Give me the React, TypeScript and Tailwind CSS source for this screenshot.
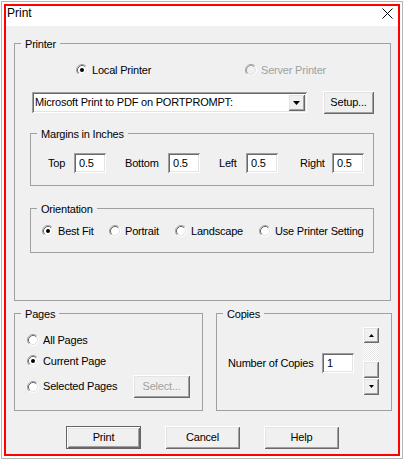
import React from "react";

// classic win32 3d edges
const raised =
  "bg-[#f0f0f0] shadow-[inset_1px_1px_0_#ffffff,inset_-1px_-1px_0_#696969,inset_2px_2px_0_#e3e3e3,inset_-2px_-2px_0_#a0a0a0]";
const sunken =
  "bg-white shadow-[inset_1px_1px_0_#a0a0a0,inset_-1px_-1px_0_#ffffff,inset_2px_2px_0_#696969,inset_-2px_-2px_0_#e3e3e3]";

function Radio({ checked = false, disabled = false }: { checked?: boolean; disabled?: boolean }) {
  return (
    <svg width="12" height="12" viewBox="0 0 12 12" className="shrink-0">
      <circle cx="6" cy="6" r="4.5" fill={disabled ? "#f0f0f0" : "#ffffff"} />
      <path d="M2.11 9.89A5.5 5.5 0 0 1 9.89 2.11" fill="none" stroke="#a0a0a0" />
      <path d="M9.89 2.11A5.5 5.5 0 0 1 2.11 9.89" fill="none" stroke="#ffffff" />
      <path d="M2.82 9.18A4.5 4.5 0 0 1 9.18 2.82" fill="none" stroke={disabled ? "#a0a0a0" : "#696969"} />
      <path d="M9.18 2.82A4.5 4.5 0 0 1 2.82 9.18" fill="none" stroke="#e3e3e3" />
      {checked && <circle cx="6" cy="6" r="2" fill="#000000" />}
    </svg>
  );
}

function Group({
  label,
  className,
  children,
}: {
  label: string;
  className: string;
  children?: React.ReactNode;
}) {
  return (
    <div className={`relative border border-[#a0a0a0] ${className}`}>
      <span className="absolute left-[6px] -top-[6px] px-[4px] bg-[#f0f0f0] leading-[13px]">
        {label}
      </span>
      {children}
    </div>
  );
}

function Button({ label, className = "" }: { label: string; className?: string }) {
  return (
    <div className={`flex items-center justify-center w-[75px] h-[23px] ${raised} ${className}`}>
      {label}
    </div>
  );
}

function Triangle({ down = true, w = 7 }: { down?: boolean; w?: number }) {
  const h = Math.ceil(w / 2);
  return (
    <svg width={w} height={h} viewBox={`0 0 ${w} ${h}`}>
      <path
        d={down ? `M0 0H${w}L${w / 2} ${h}Z` : `M0 ${h}H${w}L${w / 2} 0Z`}
        fill="#000000"
      />
    </svg>
  );
}

const margins = [
  { label: "Top", lw: "w-[26px]", ml: "ml-[17px]" },
  { label: "Bottom", lw: "w-[43px]", ml: "ml-[19px]" },
  { label: "Left", lw: "w-[27px]", ml: "ml-[19px]" },
  { label: "Right", lw: "w-[32px]", ml: "ml-[22px]" },
];

const orientations = [
  { label: "Best Fit", w: "w-[67px]", checked: true },
  { label: "Portrait", w: "w-[66px]", checked: false },
  { label: "Landscape", w: "w-[84px]", checked: false },
  { label: "Use Printer Setting", w: "", checked: false },
];

export default function App() {
  return (
    <div className="w-[405px] h-[461px] bg-white pt-[1px] pl-[1px] font-['Liberation_Sans',Arial,sans-serif] text-[11px] tracking-[-0.2px] text-black">
      <div className="w-[402px] h-[458px] border border-[#b4b4b4] p-[2px]">
        <div className="flex flex-col w-full h-full border-2 border-[#ff0000]">
          {/* title bar */}
          <div className="flex justify-between h-[20px] bg-white pl-[1px] pr-[5px]">
            <span className="text-[12px] leading-[14px] tracking-normal">Print</span>
            <svg width="11" height="11" viewBox="0 0 11 11" className="mt-[2px]">
              <path d="M0.5 0.5L10.5 10.5M10.5 0.5L0.5 10.5" stroke="#000000" strokeWidth="1" />
            </svg>
          </div>

          <div className="flex-1 flex flex-col bg-[#f0f0f0]">
            {/* Printer */}
            <Group label="Printer" className="mt-[17px] ml-[8px] w-[377px] h-[258px]">
              <div className="flex items-center h-[12px] mt-[20px] pl-[61px]">
                <div className="flex items-center gap-[4px] w-[169px]">
                  <Radio checked />
                  <span>Local Printer</span>
                </div>
                <div className="flex items-center gap-[4px] text-[#a0a0a0]">
                  <Radio disabled />
                  <span>Server Printer</span>
                </div>
              </div>

              <div className="flex items-start h-[23px] mt-[15px] pl-[17px]">
                <div className={`flex items-center w-[275px] h-[21px] mt-[1px] p-[2px] ${sunken}`}>
                  <span className="flex-1 pl-[1px] whitespace-nowrap">
                    Microsoft Print to PDF on PORTPROMPT:
                  </span>
                  <div className={`flex items-center justify-center w-[17px] h-[17px] ${raised}`}>
                    <Triangle />
                  </div>
                </div>
                <div className={`flex items-center justify-center w-[51px] h-[23px] ml-[16px] ${raised}`}>
                  Setup...
                </div>
              </div>

              <Group label="Margins in Inches" className="mt-[19px] ml-[15px] w-[344px] h-[53px]">
                <div className="flex items-center h-[20px] mt-[19px]">
                  {margins.map((m) => (
                    <div key={m.label} className={`flex items-center ${m.ml}`}>
                      <span className={m.lw}>{m.label}</span>
                      <div className={`flex items-center w-[32px] h-[20px] pl-[5px] ${sunken}`}>0.5</div>
                    </div>
                  ))}
                </div>
              </Group>

              <Group label="Orientation" className="mt-[22px] ml-[15px] w-[344px] h-[45px]">
                <div className="flex items-center h-[12px] mt-[16px] pl-[11px]">
                  {orientations.map((o) => (
                    <div key={o.label} className={`flex items-center gap-[4px] ${o.w}`}>
                      <Radio checked={o.checked} />
                      <span className="whitespace-nowrap">{o.label}</span>
                    </div>
                  ))}
                </div>
              </Group>
            </Group>

            <div className="flex items-start mt-[12px] ml-[8px] gap-[13px]">
              {/* Pages */}
              <Group label="Pages" className="w-[189px] h-[98px]">
                <div className="flex flex-col pl-[12px]">
                  <div className="flex items-center gap-[4px] h-[12px] mt-[20px]">
                    <Radio />
                    <span>All Pages</span>
                  </div>
                  <div className="flex items-center gap-[4px] h-[12px] mt-[9px]">
                    <Radio checked />
                    <span>Current Page</span>
                  </div>
                  <div className="flex items-center h-[23px] mt-[8px]">
                    <div className="flex items-center gap-[4px] w-[106px]">
                      <Radio />
                      <span>Selected Pages</span>
                    </div>
                    <div className={`flex items-center justify-center w-[57px] h-[23px] text-[#a0a0a0] ${raised}`}>
                      Select...
                    </div>
                  </div>
                </div>
              </Group>

              {/* Copies */}
              <Group label="Copies" className="w-[176px] h-[98px]">
                <div className="flex items-start pl-[11px] pt-[13px]">
                  <div className="flex items-center h-[20px] mt-[26px]">
                    <span className="w-[94px] whitespace-nowrap">Number of Copies</span>
                    <div className={`flex items-center w-[32px] h-[20px] pl-[5px] ${sunken}`}>1</div>
                  </div>
                  <div className="flex flex-col w-[16px] ml-[9px]">
                    <div className={`flex items-center justify-center h-[16px] ${raised}`}>
                      <Triangle down={false} w={5} />
                    </div>
                    <div className="h-[18px] bg-[repeating-conic-gradient(#ffffff_0_25%,#e6e6e6_0_50%)] bg-[length:2px_2px]" />
                    <div className={`h-[17px] ${raised}`} />
                    <div className={`flex items-center justify-center h-[17px] ${raised}`}>
                      <Triangle w={5} />
                    </div>
                  </div>
                </div>
              </Group>
            </div>

            {/* buttons */}
            <div className="flex mt-[15px] pl-[60px] gap-[24px]">
              <Button label="Print" className="border border-[#646464]" />
              <Button label="Cancel" />
              <Button label="Help" />
            </div>
          </div>
        </div>
      </div>
    </div>
  );
}
